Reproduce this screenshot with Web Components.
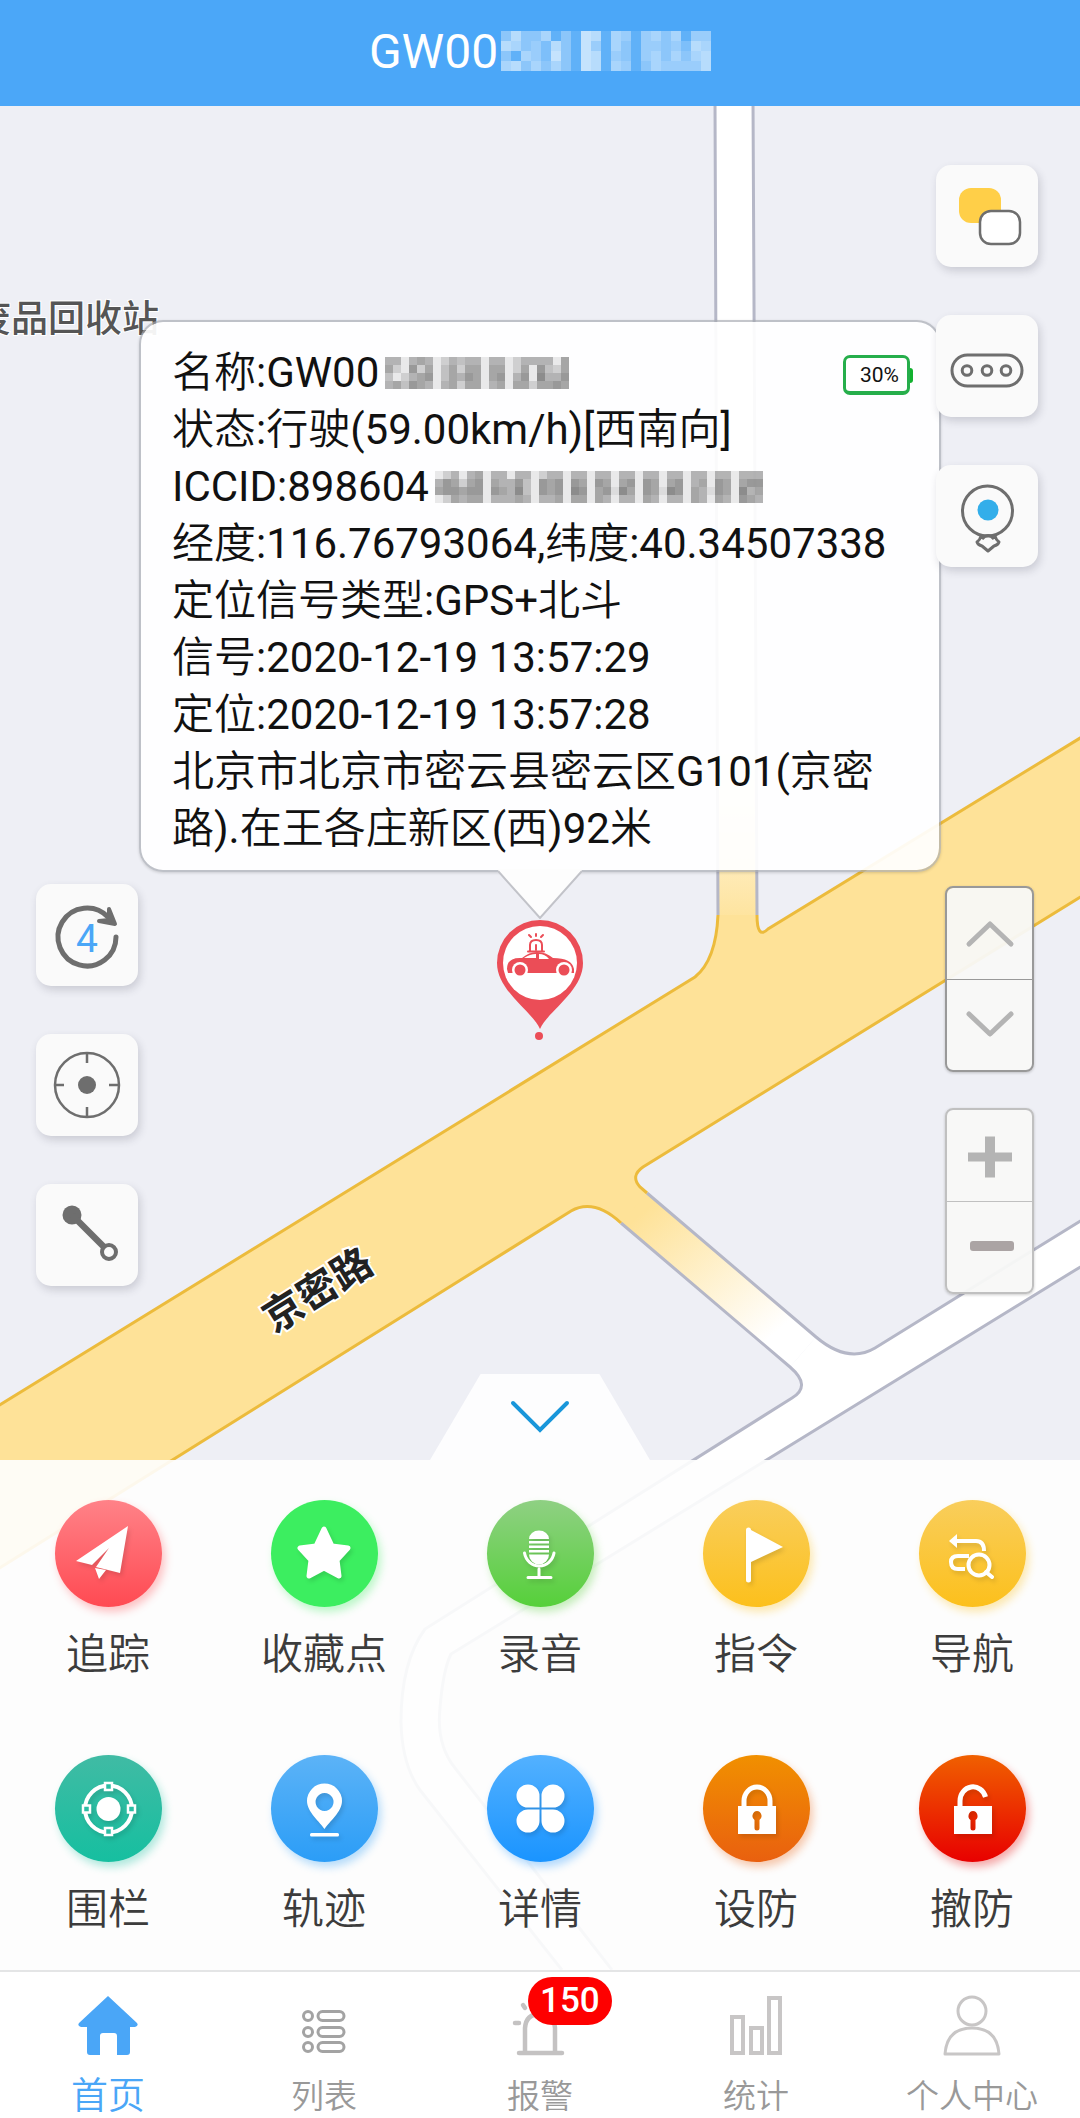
<!DOCTYPE html>
<html lang="zh-CN">
<head>
<meta charset="utf-8">
<meta name="viewport" content="width=device-width, initial-scale=1">
<title>GW00</title>
<style>
  html, body {
    margin: 0;
    min-height: 100%;
  }
  body {
    font-family: Roboto, "Noto Sans CJK SC DemiLight", "Noto Sans CJK SC", sans-serif;
    background: #fff;
  }
</style>
</head>
<body>
<tracker-app></tracker-app>

<script>
// Icons.js
const ICONS = {
  layers: `<rect x="23" y="23" width="42" height="35" rx="12" fill="#ffcf48"/>
    <rect x="44" y="46" width="40" height="33" rx="11" fill="#fff" stroke="#6e6e6e" stroke-width="2.5"/>`,
  more: `<g fill="none" stroke="#6e6e6e" stroke-width="3"><rect x="16" y="40" width="70" height="31" rx="15.5"/>
    <circle cx="31" cy="55.5" r="4.8"/><circle cx="51" cy="55.5" r="4.8"/><circle cx="70" cy="55.5" r="4.8"/></g>`,
  street: `<g fill="none" stroke="#6e6e6e" stroke-width="3"><circle cx="51.5" cy="46" r="25"/>
    <path d="M45 71 Q44 75 41 77 Q42 80 46 81 L52 86 L58 81 Q62 80 63 77 Q60 75 59 71 M46 74 Q52 67 58 74" stroke-linejoin="round"/></g>
    <circle cx="52" cy="45" r="10.5" fill="#33aeea"/>`,
  refresh: `<path d="M80 53 A29 29 0 1 1 72 33" fill="none" stroke="#6e6e6e" stroke-width="5" stroke-linecap="round"/>
    <path d="M73 25 L79 40 L63 37 L73 36 Z" fill="#6e6e6e" stroke="#6e6e6e" stroke-width="4" stroke-linejoin="round"/>`,
  target: `<g fill="none" stroke="#6e6e6e" stroke-width="2.5"><circle cx="51" cy="51" r="32"/>
    <path d="M51 19 V29 M51 73 V83 M19 51 H28 M73 51 H83"/></g><circle cx="51" cy="51" r="9" fill="#6e6e6e"/>`,
  ruler: `<circle cx="36" cy="31" r="9.5" fill="#6e6e6e"/><path d="M36 31 L68 63" stroke="#6e6e6e" stroke-width="6.5"/>
    <circle cx="73" cy="68" r="7" fill="#fafafa" stroke="#6e6e6e" stroke-width="4"/>`,
  up: `<path d="M21 55 L42 35 L63 55" fill="none" stroke="#b4b4b4" stroke-width="5" stroke-linecap="round" stroke-linejoin="round"/>`,
  down: `<path d="M21 34 L42 54 L63 34" fill="none" stroke="#b4b4b4" stroke-width="5" stroke-linecap="round" stroke-linejoin="round"/>`,
  plus: `<path d="M20 41.5 h17 v-16 h10 v16 h17 v9 h-17 v16 h-10 v-16 h-17 z" fill="#b4b4b4"/>`,
  minus: `<rect x="22" y="39" width="44" height="10" rx="3" fill="#aba4a4"/>`,

  plane: `<path d="M73 26 L21 61 L37 65 L54 48 L41 67 L65 73 Z M40 68 L44 79 L51 70 Z"/>`,
  star: `<path d="M53 29 L61 46 L77 48 L66 60 L68 76 L53 68 L38 76 L40 60 L29 48 L45 46 Z" stroke="#fff" stroke-width="5" stroke-linejoin="round"/>`,
  mic: `<path d="M42 39 a10 8.500 0 0 1 20 0 z M42 41 h20 v2.500 h-20 z M42 45.500 h20 v2.500 h-20 z M42 50 h20 v2.500 h-20 z M42 54.500 h20 a10 10 0 0 1 -20 0 z"/>
    <path d="M37.500 53 a15 16 0 0 0 29.500 0 M52 69 V77 M41 77.500 H64" fill="none" stroke="#fff" stroke-width="3" stroke-linecap="round"/>`,
  flag: `<path d="M43 30 a2.500 2.500 0 0 1 5 0 L80 47 L48 62 V80 a2.500 2.500 0 0 1 -5 0 z"/>`,
  route: `<path d="M30 41 L38 34 V48 Z"/><g fill="none" stroke="#fff" stroke-width="4">
    <path d="M36 41 H57 Q65 41 65 51 M50 56 H39 Q32 56 32 62 Q32 69 39 69 H46"/><circle cx="60" cy="65" r="10.500"/>
    <path d="M67 72 L73 77" stroke-linecap="round"/></g>`,
  fence: `<circle cx="53.500" cy="54" r="12"/><circle cx="53.500" cy="54" r="23.500" fill="none" stroke="#fff" stroke-width="4"/>
    <g fill="#2bbda3" stroke="#fff" stroke-width="2.500"><rect x="50" y="28" width="7" height="7"/><rect x="50" y="73" width="7" height="7"/>
    <rect x="28" y="50.500" width="7" height="7"/><rect x="73" y="50.500" width="7" height="7"/></g>`,
  place: `<path fill-rule="evenodd" d="M53.500 74 C49 67 36 57 36 46 a17.500 17.500 0 0 1 35 0 C71 57 58 67 53.500 74 Z M53.500 38 a9 9 0 1 0 .1 0 z"/>
    <rect x="39" y="78" width="29" height="3.500" rx="1.500"/>`,
  petals: `<path d="M52.500 52.500 H41 A11.500 11.500 0 1 1 52.500 41 Z M54.500 52.500 V41 A11.500 11.500 0 1 1 66 52.500 Z
    M52.500 54.500 V66 A11.500 11.500 0 1 1 41 54.500 Z M54.500 54.500 H66 A11.500 11.500 0 1 1 54.500 66 Z"/>`,
  lock: `<path d="M41 53 V46 a13 14 0 0 1 26 0 V53" fill="none" stroke="#fff" stroke-width="5"/>
    <path fill-rule="evenodd" d="M35 51 h38 v28 h-38 z M54 56 a5 5 0 0 0 -2.500 9 v8 a2.500 2.500 0 0 0 5 0 v-8 a5 5 0 0 0 -2.500 -9 z"/>`,
  unlock: `<path d="M41 53 V46 a13 14 0 0 1 25.500 -4" fill="none" stroke="#fff" stroke-width="5"/>
    <path fill-rule="evenodd" d="M35 51 h38 v28 h-38 z M54 56 a5 5 0 0 0 -2.500 9 v8 a2.500 2.500 0 0 0 5 0 v-8 a5 5 0 0 0 -2.500 -9 z"/>`,

  home: `<path d="M30 2 L59 29 Q61 32 57 33 H52 V58 Q52 61 49 61 H39 V42 Q39 39 36 39 H25 Q22 39 22 42 V61 H12 Q9 61 9 58 V33 H3 Q-1 32 1 29 Z" fill="#4aa6f7"/>`,
  list: `<g fill="none" stroke="#a3a3a3" stroke-width="3"><circle cx="14" cy="22" r="4.500"/><circle cx="14" cy="38" r="4.500"/><circle cx="14" cy="53" r="4.500"/>
    <rect x="24" y="17.500" width="26" height="9" rx="4.500"/><rect x="24" y="33.500" width="26" height="9" rx="4.500"/><rect x="24" y="48.500" width="26" height="9" rx="4.500"/></g>`,
  alarm: `<g fill="none" stroke="#c4c2c2" stroke-width="4.500" stroke-linecap="round"><path d="M9 59 H52 M15 58 V34 Q16 20 30 20 Q44 20 45 34 V58"/>
    <path d="M5 29 H9 M13 11 L15 14"/></g>`,
  stats: `<g fill="none" stroke="#c8c6c6" stroke-width="4"><rect x="6" y="23" width="11" height="36"/><rect x="25" y="34" width="11" height="25"/>
    <rect x="43" y="4" width="11" height="55"/></g>`,
  person: `<g fill="none" stroke="#c8c6c6" stroke-width="3" stroke-linejoin="round"><circle cx="30" cy="17" r="14"/>
    <path d="M3 60 Q5 34 30 34 Q55 34 57 60 Z"/></g>`
};

const svgIcon = (name, w, h = w) =>
  `<svg viewBox="0 0 ${w} ${h}" width="${w}" height="${h}" fill="#fff" aria-hidden="true">${ICONS[name] || ''}</svg>`;

// PixelMask.js
// Mosaic strip over a private number. Each row is a string of levels 0-9.
class PixelMask extends HTMLElement {
  constructor() {
    super();
    this.attachShadow({ mode: 'open' });
  }

  connectedCallback() {
    const rows = this.getAttribute('rows').split(' ');
    const cell = Number(this.getAttribute('cell'));
    const width = rows[0].length * cell;
    const height = rows.length * cell;
    const rects = rows.map((row, y) => [...row].map((level, x) =>
      `<rect x="${x * cell}" y="${y * cell}" width="${cell}" height="${cell}" fill-opacity="${(level * 0.8 + 1.2) / 10}"/>`
    ).join('')).join('');

    this.shadowRoot.innerHTML = `
      <style>
        :host { display: inline-block; }
        svg { display: block; fill: currentColor; }
      </style>
      <svg width="${width}" height="${height}" shape-rendering="crispEdges" aria-hidden="true">${rects}</svg>
    `;
  }
}
customElements.define('pixel-mask', PixelMask);

// TitleBar.js
class TitleBar extends HTMLElement {
  constructor() {
    super();
    this.attachShadow({ mode: 'open' });
    this.shadowRoot.innerHTML = `
      <style>
        :host {
          display: block;
          background: #4ba7f8;
          color: #fff;
        }
        h1 {
          display: flex;
          align-items: center;
          justify-content: center;
          gap: 3px;
          height: 106px;
          margin: 0;
          padding-bottom: 4px;
          box-sizing: border-box;
          font-size: 48px;
          font-weight: 400;
        }
      </style>
      <h1><slot></slot></h1>
    `;
  }
}
customElements.define('title-bar', TitleBar);

// RoadMap.js
class RoadMap extends HTMLElement {
  constructor() {
    super();
    this.attachShadow({ mode: 'open' });
    this.shadowRoot.innerHTML = `
      <style>
        :host {
          position: absolute;
          inset: 0;
          overflow: hidden;
          background: #eeeff5;
        }
        svg { display: block; width: 100%; height: 100%; }
        text { font-family: "Noto Sans CJK SC", sans-serif; }
        .edge { fill: none; stroke: #b5b7c7; stroke-width: 3; }
        .main { fill: none; stroke: #ecbb3c; stroke-width: 3; }
        .place { font-size: 37px; font-weight: 500; fill: #555; stroke: #fff; stroke-width: 2; paint-order: stroke; }
        .road { font-size: 40px; font-weight: 700; fill: #222; stroke: #fff; stroke-width: 4; paint-order: stroke; }
      </style>
      <svg viewBox="0 106 1080 1864" preserveAspectRatio="xMidYMin slice">
        <defs>
          <linearGradient id="north" gradientUnits="userSpaceOnUse" x1="0" y1="930" x2="0" y2="730">
            <stop offset="0" stop-color="#fee298"/><stop offset="1" stop-color="#fff"/>
          </linearGradient>
          <linearGradient id="south" gradientUnits="userSpaceOnUse" x1="640" y1="1215" x2="755" y2="1350">
            <stop offset="0" stop-color="#fee298"/><stop offset="1" stop-color="#fff"/>
          </linearGradient>
        </defs>
        <!-- side roads -->
        <path fill="url(#north)" d="M715 100 H753 L757 940 H717 Z"/>
        <path fill="#fff" d="M1090 1215 L875 1348 Q848 1364 816 1337 L790 1367 Q812 1386 792 1398
          L425 1629 Q401 1662 401 1722 Q402 1765 420 1790 L562 1970 H612 L455 1768 Q436 1744 440 1708 Q443 1670 451 1654 L1090 1261 Z"/>
        <path fill="url(#south)" d="M621 1223 L640 1187 L647 1193 L816 1337 L790 1367 Z"/>
        <!-- trunk road -->
        <path fill="#fee298" d="M-10 1411 L695 977 Q716 960 717 915 H757 Q757 940 768 929 L1090 732 V891 L643 1167
          Q630 1176 640 1187 L647 1193 L621 1223 Q594 1198 571 1211 L-10 1574 Z"/>
        <path class="edge" d="M715 100 L718 915 M753 100 L757 915 M647 1193 L816 1337 Q848 1364 875 1348 L1090 1215
          M621 1223 L790 1367 Q812 1386 792 1398 L425 1629 Q401 1662 401 1722 Q402 1765 420 1790 L562 1970
          M1090 1261 L451 1654 Q443 1670 440 1708 Q436 1744 455 1768 L612 1970"/>
        <path class="main" d="M-10 1411 L695 977 Q716 960 718 915 M757 915 Q757 940 768 929 L1090 732
          M1090 891 L643 1167 Q630 1176 640 1187 L647 1193 M621 1223 Q594 1198 571 1211 L-10 1574"/>
        <text class="place" x="-26" y="332">废品回收站</text>
        <text class="road" text-anchor="middle" transform="translate(325 1302) rotate(-32)">京密路</text>
      </svg>
    `;
  }
}
customElements.define('road-map', RoadMap);

// BatteryLevel.js
class BatteryLevel extends HTMLElement {
  constructor() {
    super();
    this.attachShadow({ mode: 'open' });
    this.shadowRoot.innerHTML = `
      <style>
        :host {
          display: inline-flex;
          align-items: center;
          color: #111;
          font-size: 21px;
          line-height: 32px;
        }
        .case {
          padding: 1px 8px 0 14px;
          border: 3px solid #26ae4b;
          border-bottom-width: 4px;
          border-radius: 7px;
          background: #fff;
        }
        .nub {
          width: 3px;
          height: 15px;
          border-radius: 0 3px 3px 0;
          background: #12b12f;
        }
      </style>
      <span class="case"><slot></slot></span><span class="nub"></span>
    `;
  }
}
customElements.define('battery-level', BatteryLevel);

// DeviceCallout.js
class DeviceCallout extends HTMLElement {
  constructor() {
    super();
    this.attachShadow({ mode: 'open' });
    this.shadowRoot.innerHTML = `
      <style>
        :host {
          position: absolute;
          top: 214px;
          left: 139px;
          right: 139px;
          display: flex;
          flex-direction: column;
          align-items: center;
        }
        .bubble {
          position: relative;
          width: 100%;
          box-sizing: border-box;
          padding: 22px 27px 13px 31px;
          border: 2px solid rgba(165, 167, 175, 0.65);
          border-radius: 24px;
          background: rgba(255, 255, 255, 0.93);
          background-clip: padding-box;
          box-shadow: 0 1px 3px rgba(0, 0, 0, 0.15);
          color: #111;
          font-size: 42px;
          line-height: 57px;
        }
        ::slotted(battery-level) {
          position: absolute;
          top: 33px;
          right: 26px;
        }
        svg { display: block; }
        .tail {
          position: relative;
          margin-top: -3px;
        }
      </style>
      <div class="bubble"><slot></slot><slot name="battery"></slot></div>
      <svg class="tail" width="84" height="50" viewBox="0 0 84 50" aria-hidden="true">
        <path d="M0 0 H84 V2 L42 49 L0 2 Z" fill="#fdfdfd"/>
        <path d="M0 2 L42 49 L84 2" fill="none" stroke="#c2c3c9" stroke-width="2"/>
      </svg>
      <svg class="pin" width="88" height="122" viewBox="0 0 88 122" aria-hidden="true">
        <path d="M44 110 C36 92 1 72 1 44 A43 43 0 0 1 87 44 C87 72 52 92 44 110 Z" fill="#eb4d57"/>
        <circle cx="44" cy="44" r="37" fill="#fff"/>
        <circle cx="43" cy="117" r="4" fill="#eb4d57"/>
        <g fill="#eb4d57">
          <path d="M11 50 Q11 38 26 39 Q33 33 41 33 Q50 33 57 39 Q76 39 78 50 V54 H12 Z"/>
          <circle cx="24" cy="51" r="8" fill="#fff"/><circle cx="24" cy="51" r="5.500"/>
          <circle cx="68" cy="51" r="8" fill="#fff"/><circle cx="68" cy="51" r="5.500"/>
          <path d="M28 39 Q34 35 40 35 V39 Z M43 35 Q49 35 53 40 H43 Z" fill="#fff"/>
        </g>
        <g fill="none" stroke="#eb4d57" stroke-width="2" stroke-linecap="round">
          <path d="M34 32 V26 Q34 21 40 21 Q46 21 46 26 V32 M32 32.500 H48"/>
          <path d="M40 26 V31 M40 17 V15 M35 18 L33 16 M45 18 L47 16"/>
        </g>
      </svg>
    `;
  }
}
customElements.define('device-callout', DeviceCallout);

// InfoLine.js
class InfoLine extends HTMLElement {
  constructor() {
    super();
    this.attachShadow({ mode: 'open' });
    this.shadowRoot.innerHTML = `
      <style>
        :host { display: block; }
        ::slotted(pixel-mask) {
          color: #555;
          margin-left: 6px;
          vertical-align: -2px;
        }
      </style>
      <slot></slot>
    `;
  }
}
customElements.define('info-line', InfoLine);

// ToolButton.js
class ToolButton extends HTMLElement {
  constructor() {
    super();
    this.attachShadow({ mode: 'open' });
  }

  connectedCallback() {
    this.shadowRoot.innerHTML = `
      <style>
        :host { display: block; }
        button {
          display: grid;
          place-items: center;
          width: 102px;
          height: 102px;
          padding: 0;
          border: 0;
          border-radius: 15px;
          background: #fafafa;
          box-shadow: 2px 4px 8px rgba(60, 60, 80, 0.2);
          color: #4aa6f7;
          font: 39px/1 Roboto, sans-serif;
        }
        svg, span { grid-area: 1 / 1; }
        span { padding-top: 9px; }
      </style>
      <button type="button" aria-label="${this.getAttribute('label')}">
        ${svgIcon(this.getAttribute('icon'), 102)}
        <span><slot></slot></span>
      </button>
    `;
  }
}
customElements.define('tool-button', ToolButton);

// StepPair.js
class StepPair extends HTMLElement {
  constructor() {
    super();
    this.attachShadow({ mode: 'open' });
  }

  connectedCallback() {
    const [first, second] = this.getAttribute('icons').split(' ');
    const [firstLabel, secondLabel] = this.getAttribute('labels').split(' ');
    this.shadowRoot.innerHTML = `
      <style>
        :host {
          display: block;
          border: 2px solid var(--edge, #999);
          border-radius: 8px;
          background: rgba(248, 248, 247, 0.95);
          background-clip: padding-box;
          box-shadow: 0 1px 3px rgba(0, 0, 0, 0.2);
        }
        button {
          display: grid;
          place-items: center;
          width: 85px;
          height: 91px;
          padding: 0;
          border: 0;
          background: none;
        }
        button + button { border-top: 1px solid var(--edge, #999); }
      </style>
      <button type="button" aria-label="${firstLabel}">${svgIcon(first, 84, 90)}</button>
      <button type="button" aria-label="${secondLabel}">${svgIcon(second, 84, 90)}</button>
    `;
  }
}
customElements.define('step-pair', StepPair);

// ActionButton.js
class ActionButton extends HTMLElement {
  constructor() {
    super();
    this.attachShadow({ mode: 'open' });
  }

  connectedCallback() {
    const from = this.getAttribute('from');
    const to = this.getAttribute('to');
    this.shadowRoot.innerHTML = `
      <style>
        :host { display: block; }
        button {
          display: flex;
          flex-direction: column;
          align-items: center;
          gap: 18px;
          width: 100%;
          padding: 40px 0 30px;
          border: 0;
          background: none;
          color: #3c3c3c;
          font: inherit;
          font-size: 42px;
          line-height: 60px;
        }
        .disc {
          width: 107px;
          height: 107px;
          border-radius: 50%;
          background: linear-gradient(${from}, ${to});
          box-shadow: 3px 5px 8px ${to}55;
        }
        svg { display: block; filter: drop-shadow(2px 3px 2px rgba(0, 0, 0, 0.12)); }
      </style>
      <button type="button">
        <span class="disc">${svgIcon(this.getAttribute('icon'), 107)}</span>
        <slot></slot>
      </button>
    `;
  }
}
customElements.define('action-button', ActionButton);

// ActionPanel.js
class ActionPanel extends HTMLElement {
  constructor() {
    super();
    this.attachShadow({ mode: 'open' });
    this.shadowRoot.innerHTML = `
      <style>
        :host {
          position: relative;
          display: flex;
          flex-direction: column;
          align-items: center;
        }
        .handle {
          display: grid;
          place-items: center;
          width: 220px;
          height: 86px;
          padding: 0;
          border: 0;
          background: #fdfdfe;
          clip-path: polygon(23% 0, 77% 0, 100% 100%, 0 100%);
        }
        .grid {
          display: grid;
          grid-template-columns: repeat(5, 1fr);
          width: 100%;
          background: rgba(254, 254, 254, 0.91);
        }
      </style>
      <button class="handle" type="button" aria-label="收起">
        <svg width="60" height="34" viewBox="0 0 60 34" aria-hidden="true">
          <path d="M3 3 L30 30 L57 3" fill="none" stroke="#1996da" stroke-width="4" stroke-linecap="round"/>
        </svg>
      </button>
      <div class="grid"><slot></slot></div>
    `;
  }
}
customElements.define('action-panel', ActionPanel);

// TabItem.js
class TabItem extends HTMLElement {
  constructor() {
    super();
    this.attachShadow({ mode: 'open' });
  }

  connectedCallback() {
    const badge = this.getAttribute('badge');
    this.shadowRoot.innerHTML = `
      <style>
        :host {
          display: block;
          color: #999;
          font-size: 33px;
        }
        :host([active]) {
          color: #4aa6f7;
          font-size: 37px;
        }
        a {
          position: relative;
          display: flex;
          flex-direction: column;
          align-items: center;
          gap: 20px;
          padding-top: 22px;
          color: inherit;
          line-height: 42px;
          text-decoration: none;
        }
        svg { display: block; }
        .badge {
          position: absolute;
          top: 5px;
          left: calc(50% - 12px);
          padding: 0 12px;
          border-radius: 24px;
          background: #fe0000;
          color: #fff;
          font-size: 35px;
          font-weight: 500;
          line-height: 48px;
        }
      </style>
      <a href="#${this.getAttribute('icon')}">
        ${svgIcon(this.getAttribute('icon'), 60, 62)}
        <slot></slot>
        ${badge ? `<span class="badge">${badge}</span>` : ''}
      </a>
    `;
  }
}
customElements.define('tab-item', TabItem);

// TabBar.js
class TabBar extends HTMLElement {
  constructor() {
    super();
    this.attachShadow({ mode: 'open' });
    this.shadowRoot.innerHTML = `
      <style>
        :host { display: block; }
        nav {
          display: grid;
          grid-template-columns: repeat(5, 1fr);
          border-top: 2px solid #e4e5e6;
          background: #fff;
        }
      </style>
      <nav><slot></slot></nav>
    `;
  }
}
customElements.define('tab-bar', TabBar);

// TrackerApp.js
class TrackerApp extends HTMLElement {
  constructor() {
    super();
    this.attachShadow({ mode: 'open' });
    this.shadowRoot.innerHTML = `
      <style>
        :host {
          display: flex;
          flex-direction: column;
          min-height: 100vh;
        }
        main {
          position: relative;
          display: flex;
          flex-direction: column;
          flex: 1;
        }
        .tools {
          position: relative;
          display: flex;
          flex: 1;
          justify-content: space-between;
          padding: 59px 42px 80px 36px;
        }
        .column {
          display: flex;
          flex-direction: column;
          gap: 48px;
        }
        .left {
          justify-content: flex-end;
          padding-bottom: 8px;
        }
        .right { justify-content: space-between; }
        .steps {
          display: flex;
          flex-direction: column;
          align-items: flex-end;
          gap: 36px;
          padding-right: 4px;
        }
        .zoom { --edge: #c0c0c0; }
      </style>
      <title-bar>GW00<pixel-mask cell="10" rows="363350307605404535044 653426307405304434265 305427307604304535356 563535307605403544446"></pixel-mask></title-bar>
      <main>
        <road-map></road-map>
        <device-callout>
          <info-line>名称:GW00<pixel-mask cell="8" rows="44045402434404402444405 52062503525505502506325 30245603546505604607446 45365404525504505525565"></pixel-mask></info-line>
          <info-line>状态:行驶(59.00km/h)[西南向]</info-line>
          <info-line>ICCID:898604<pixel-mask cell="8" rows="02404504404402440440440440440440440440444 46525605446306560650650560650560450650566 56656606547306560760561750651760541650745 02545504445404450550540440540440540540654"></pixel-mask></info-line>
          <info-line>经度:116.76793064,纬度:40.34507338</info-line>
          <info-line>定位信号类型:GPS+北斗</info-line>
          <info-line>信号:2020-12-19 13:57:29</info-line>
          <info-line>定位:2020-12-19 13:57:28</info-line>
          <info-line>北京市北京市密云县密云区G101(京密路).在王各庄新区(西)92米</info-line>
          <battery-level slot="battery">30%</battery-level>
        </device-callout>
        <div class="tools">
          <div class="column left">
            <tool-button icon="refresh" label="刷新">4</tool-button>
            <tool-button icon="target" label="定位"></tool-button>
            <tool-button icon="ruler" label="测距"></tool-button>
          </div>
          <div class="column right">
            <div class="column">
              <tool-button icon="layers" label="图层"></tool-button>
              <tool-button icon="more" label="更多"></tool-button>
              <tool-button icon="street" label="街景"></tool-button>
            </div>
            <div class="steps">
              <step-pair icons="up down" labels="上一个 下一个"></step-pair>
              <step-pair class="zoom" icons="plus minus" labels="放大 缩小"></step-pair>
            </div>
          </div>
        </div>
        <action-panel>
          <action-button icon="plane" from="#ff8288" to="#ff4a52">追踪</action-button>
          <action-button icon="star" from="#3cee60" to="#3cee60">收藏点</action-button>
          <action-button icon="mic" from="#8fd083" to="#56d03a">录音</action-button>
          <action-button icon="flag" from="#f9ce5c" to="#fcc01c">指令</action-button>
          <action-button icon="route" from="#f9ce5c" to="#fcc01c">导航</action-button>
          <action-button icon="fence" from="#40bba4" to="#16bfa0">围栏</action-button>
          <action-button icon="place" from="#5cb3f7" to="#2b9df7">轨迹</action-button>
          <action-button icon="petals" from="#53b1ff" to="#1a94ff">详情</action-button>
          <action-button icon="lock" from="#f19000" to="#e9600f">设防</action-button>
          <action-button icon="unlock" from="#f06000" to="#e80000">撤防</action-button>
        </action-panel>
      </main>
      <tab-bar>
        <tab-item icon="home" active>首页</tab-item>
        <tab-item icon="list">列表</tab-item>
        <tab-item icon="alarm" badge="150">报警</tab-item>
        <tab-item icon="stats">统计</tab-item>
        <tab-item icon="person">个人中心</tab-item>
      </tab-bar>
    `;
  }
}
customElements.define('tracker-app', TrackerApp);
</script>
</body>
</html>
